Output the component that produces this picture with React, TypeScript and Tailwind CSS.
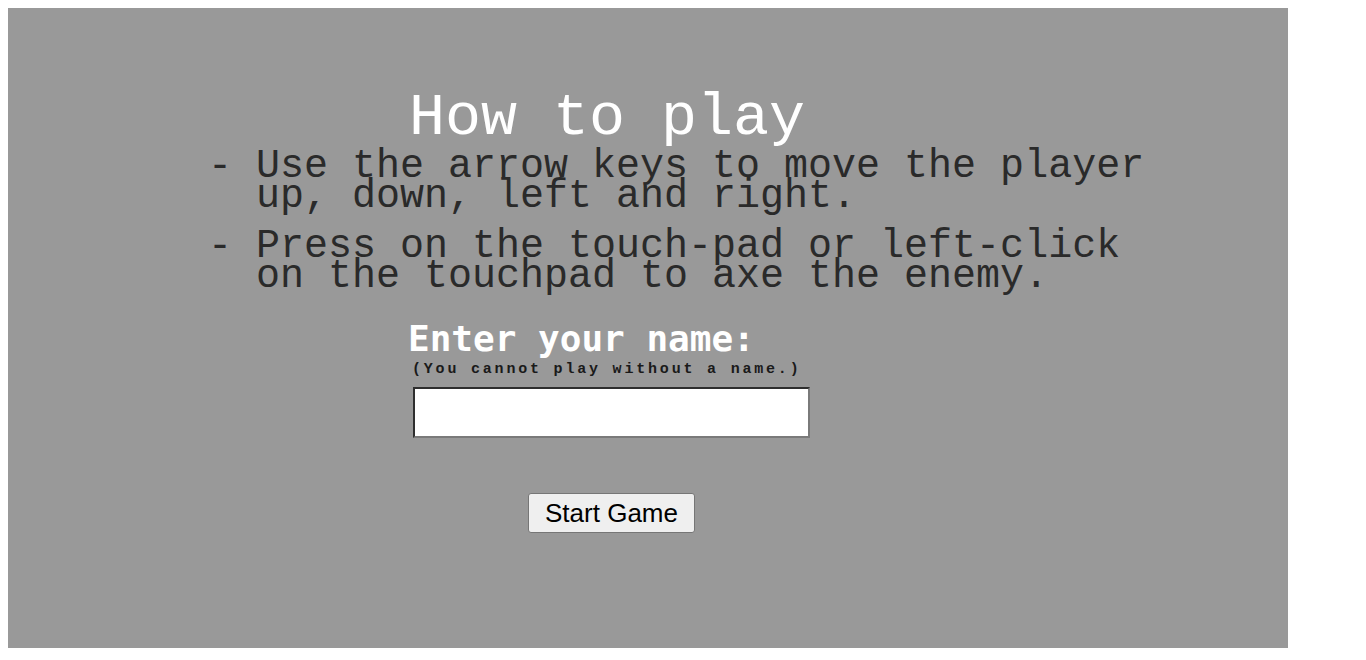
import React from "react";

export default function App() {
  const mono = { fontFamily: '"Liberation Mono", "Courier New", monospace' };
  return (
    <div className="bg-white w-[1366px] h-[660px] p-[8px]">
      <div className="bg-[#999999] w-[1280px] h-[640px] pt-[76px]">
        <h1
          className="ml-[401px] text-[60px] leading-[68px] text-white font-normal"
          style={mono}
        >
          How to play
        </h1>
        <ul className="ml-[200px] text-[40px] leading-[30px] text-[#2a2a2a] flex flex-col gap-[20px]" style={mono}>
          <li className="flex">
            <span className="w-[48px] shrink-0">-</span>
            <span>
              Use the arrow keys to move the player
              <br />
              up, down, left and right.
            </span>
          </li>
          <li className="flex">
            <span className="w-[48px] shrink-0">-</span>
            <span>
              Press on the touch-pad or left-click
              <br />
              on the touchpad to axe the enemy.
            </span>
          </li>
        </ul>
        <div className="ml-[400px] w-[420px] mt-[29px] flex flex-col">
          <div
            className="text-[36px] leading-[36px] font-bold text-white"
            style={{ fontFamily: '"DejaVu Sans Mono", monospace' }}
          >
            Enter your name:
          </div>
          <div
            className="mt-[5px] ml-[4px] text-[15px] leading-[16px] font-bold tracking-[2.8px] text-[#1a1a1a]"
            style={mono}
          >
            (You cannot play without a name.)
          </div>
          <div className="ml-[5px] w-[397px] flex flex-col items-center">
            <input
              type="text"
              className="mt-[9px] w-[397px] h-[51px] bg-white border-2 border-t-[#2e2e2e] border-l-[#2e2e2e] border-b-[#7a7a7a] border-r-[#7a7a7a] outline-none"
            />
            <button
              className="mt-[55px] w-[167px] h-[40px] bg-[#efefef] border border-[#767676] rounded-[3px] text-[26px] leading-[30px] text-black"
              style={{ fontFamily: '"Liberation Sans", Arial, sans-serif' }}
            >
              Start Game
            </button>
          </div>
        </div>
      </div>
    </div>
  );
}
